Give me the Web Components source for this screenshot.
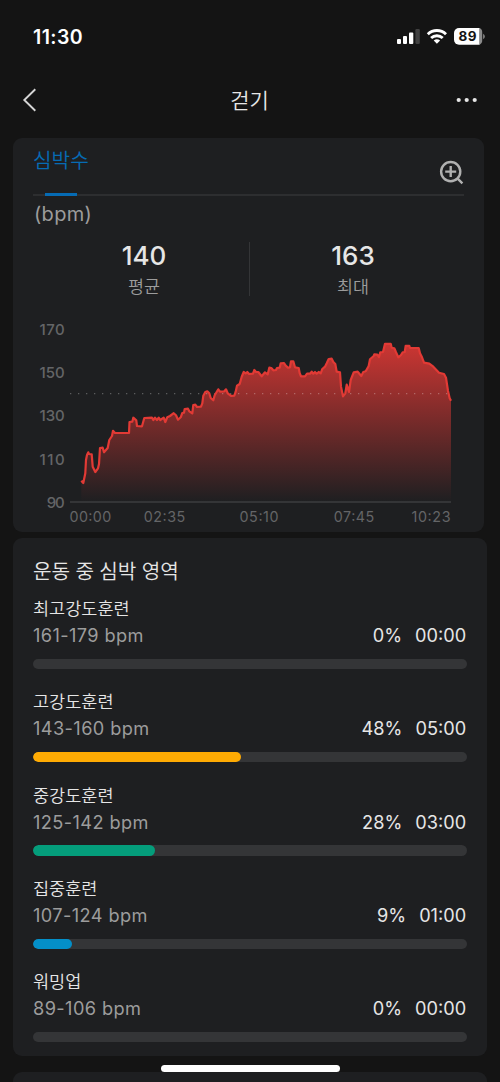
<!DOCTYPE html>
<html lang="ko">
<head>
<meta charset="utf-8">
<meta name="viewport" content="width=device-width, initial-scale=1">
<title>걷기</title>
<style>
    body {
        margin: 0;
        background: #141414;
        color: #e6e6e6;
        font-family: Inter, "Noto Sans CJK KR", sans-serif;
        overflow: hidden;
    }
</style>
</head>
<body>

<workout-screen>
    <status-bar slot="top" time="11:30" battery="89"></status-bar>
    <nav-bar slot="top">걷기</nav-bar>

    <workout-card class="heart">
        <chart-tabs>심박수</chart-tabs>
        <stat-pair unit="(bpm)">
            <stat-value value="140">평균</stat-value>
            <stat-value value="163">최대</stat-value>
        </stat-pair>
        <heart-chart></heart-chart>
    </workout-card>

    <workout-card class="zones">
        <zone-list>
            <span slot="title">운동 중 심박 영역</span>
            <zone-row range="161-179 bpm" percent="0" time="00:00">최고강도훈련</zone-row>
            <zone-row range="143-160 bpm" percent="48" time="05:00" color="#ffab03">고강도훈련</zone-row>
            <zone-row range="125-142 bpm" percent="28" time="03:00" color="#049d7b">중강도훈련</zone-row>
            <zone-row range="107-124 bpm" percent="9" time="01:00" color="#048fc8">집중훈련</zone-row>
            <zone-row range="89-106 bpm" percent="0" time="00:00">워밍업</zone-row>
        </zone-list>
    </workout-card>

    <workout-card class="next"></workout-card>
</workout-screen>

<script>
function define(name, html, setup) {
    var template = document.createElement("template");
    template.innerHTML = html;

    window.customElements.define(name, class extends HTMLElement {
        constructor() {
            super();
            this.shadow = this.attachShadow({ mode: "open" });
            this.shadow.appendChild(template.content.cloneNode(true));
        }

        connectedCallback() {
            if (setup) setup(this, this.shadow);
        }
    });
}

define("workout-screen", `
<style>
    :host {
        display: block;
        position: relative;
        height: 1082px;
        overflow: hidden;
    }

    main {
        display: flex;
        flex-direction: column;
        padding-left: 13px;
    }

    ::slotted(.heart) { width: 471px; height: 393.5px; margin-bottom: 6.5px; }
    ::slotted(.zones) { width: 474px; height: 517.5px; margin-bottom: 16.5px; }
    ::slotted(.next) { width: 474px; height: 40px; }

    /* Home indicator floats over the scrolling cards */
    #home {
        position: absolute;
        left: 161px;
        bottom: 10px;
        width: 179px;
        height: 7px;
        border-radius: 4px;
        background: #fff;
    }
</style>
<slot name="top"></slot>
<main><slot></slot></main>
<div id="home"></div>
`);

define("status-bar", `
<style>
    :host {
        display: flex;
        justify-content: space-between;
        align-items: center;
        height: 73px;
        padding: 0 14px 0 33px;
        color: #fff;
    }

    #time {
        font-size: 19.5px;
        font-weight: 600;
        line-height: 24px;
        letter-spacing: 0.4px;
    }

    svg { display: block; }
    text { font-weight: 700; font-size: 13.5px; letter-spacing: 0.3px; }
</style>
<span id="time"></span>
<svg width="90" height="20" viewBox="396 27 90 20">
    <rect x="397" y="39" width="4" height="5" rx="1" fill="#fff"/>
    <rect x="403" y="36" width="4" height="8" rx="1" fill="#fff"/>
    <rect x="409" y="32.6" width="4.3" height="11.4" rx="1" fill="#fff"/>
    <rect x="415.4" y="29" width="4.4" height="15" rx="1.2" fill="#414141"/>
    <g fill="none" stroke="#fff" stroke-width="2.9">
        <path d="M427.8 34.2a13.2 13.2 0 0 1 18.2 0"/>
        <path d="M431.1 38a8.4 8.4 0 0 1 11.6 0"/>
    </g>
    <path d="M433.7 40.6a4.8 4.8 0 0 1 6.4 0L436.9 43.7z" fill="#fff"/>
    <path d="M459 28h20.6v16.8H459a5 5 0 0 1-5-5V33a5 5 0 0 1 5-5z" fill="#fff"/>
    <path d="M479.6 28.1a4.6 4.6 0 0 1 2.6 4.4v7.6a4.6 4.6 0 0 1-2.6 4.6z" fill="#8b8b8b"/>
    <path d="M483 33.8q2 .9 2 2.7t-2 2.7z" fill="#777"/>
    <text x="467.7" y="41.4" text-anchor="middle" fill="#141414"></text>
</svg>
`, (host, root) => {
    root.querySelector("#time").textContent = host.getAttribute("time");
    root.querySelector("text").textContent = host.getAttribute("battery");
});

define("nav-bar", `
<style>
    :host {
        display: grid;
        grid-template-columns: 40px 1fr 40px;
        align-items: center;
        height: 54px;
        padding: 0 13px 11px 12px;
    }

    span {
        padding-top: 2px;
        text-align: center;
        font-size: 21px;
        font-weight: 350;
        line-height: 30px;
    }

    svg { display: block; }
</style>
<svg width="40" height="30" viewBox="12 85 40 30">
    <path d="M35.3 89.3 24.3 100l11 10.7" fill="none" stroke="#d6d6d6" stroke-width="1.9"/>
</svg>
<span><slot></slot></span>
<svg width="40" height="30" viewBox="447 85 40 30" fill="#e6e6e6">
    <circle cx="458.7" cy="100" r="2.1"/>
    <circle cx="466.7" cy="100" r="2.1"/>
    <circle cx="474.7" cy="100" r="2.1"/>
</svg>
`);

define("workout-card", `
<style>
    :host {
        display: block;
        box-sizing: border-box;
        flex: none;
        border-radius: 9px;
        background: #1e1f21;
        overflow: hidden;
    }
</style>
<slot></slot>
`);

define("chart-tabs", `
<style>
    :host {
        display: flex;
        justify-content: space-between;
        height: 56px;
        margin: 0 20px;
        border-bottom: 2px solid #2d2e30;
    }

    #tab {
        display: flex;
        flex-direction: column;
        justify-content: space-between;
        align-items: center;
        box-sizing: border-box;
        height: 58px;
        padding-top: 8px;
        color: #066bb4;
        font-size: 20.2px;
        font-weight: 350;
        line-height: 30px;
    }

    #tab::after {
        content: "";
        width: 32px;
        height: 3px;
        background: #066bb4;
    }

    svg { display: block; margin-top: 20px; }
</style>
<div id="tab"><slot></slot></div>
<svg width="26" height="28" viewBox="438 158 26 28" fill="none" stroke="#b0b0b0" stroke-width="2.4">
    <circle cx="450.7" cy="171.6" r="9.6"/>
    <path d="M445.2 171.6h11M450.7 166.1v11M457.4 178.4l5 4.9"/>
</svg>
`);

define("stat-pair", `
<style>
    :host { display: block; }

    #unit {
        margin-left: 21px;
        height: 46px;
        font-size: 20px;
        line-height: 36px;
        letter-spacing: 0.3px;
        color: #9c9c9c;
    }

    #pair {
        display: grid;
        grid-template-columns: 1fr 1fr;
        height: 54px;
        margin: 0 26px 14px 27px;
        background: linear-gradient(#343537, #343537) center / 1px 100% no-repeat;
    }
</style>
<div id="unit"></div>
<div id="pair"><slot></slot></div>
`, (host, root) => {
    root.querySelector("#unit").textContent = host.getAttribute("unit");
});

define("stat-value", `
<style>
    :host { display: block; padding-right: 1px; text-align: center; }

    b {
        display: block;
        font-size: 26px;
        font-weight: 500;
        line-height: 28px;
    }

    span {
        display: block;
        margin-top: 4px;
        font-size: 17.4px;
        font-weight: 350;
        line-height: 26px;
        color: #9c9c9c;
    }
</style>
<b></b>
<span><slot></slot></span>
`, (host, root) => {
    root.querySelector("b").textContent = host.getAttribute("value");
});

// Heart rate trace, x/y in chart units
const TRACE = `81.3,480.7 83.3,483 85.3,473.3 86,460 87,455 88.3,452.3 89,454 91.7,454.3 92.7,466.7
95.3,472 98,468.3 99,464 100,448 102.7,447.7 104,452.3 107.7,448 109.3,440 112,436 113,430.8
115,433 129,433 129.5,422 132.3,421.7 133.3,417.7 136.3,420.3 137,426 142,426.3 144.3,418
152,417.7 153.3,420 155,417.7 157,420 158.7,417.7 160.3,420 163.7,417.7 165.3,422 167.3,417.3
170,416 173.7,413.2 176,415.3 178,419.7 180.7,417.3 182.3,413 184,412.7 184.7,409 188,408.7
189.3,411.3 192.3,413.3 193.3,405 195.3,404.7 197,407 201,406.7 202.3,403.3 203.3,395.7
205.3,392 207.3,391.3 209.3,393.3 210.7,398 213.3,400.3 214.7,395.3 218.3,389.3 220,391.7
224.3,391.3 226,389.3 227.7,393.3 231.3,396 234.3,395.7 235.7,391.7 237,385.7 239.7,384
241.7,376.7 243.7,372 245.7,373.3 247.3,372 249,374 253,373.7 254.3,370 256,372 258.3,372
261.7,376.3 265,372.3 267.7,374.3 269.3,367.7 271.3,368 273.3,370.3 276,370 277,368
279.7,367.7 280.7,363.3 284,363 285.7,365.7 288,367.7 290,367.3 291,361.3 293.3,361.3
295,367.3 298.7,368 299.7,373.3 301,376.3 305,376.3 307,373.7 310,373.7 311.7,371.7
313.3,373.7 315,372 316.7,373.7 318.7,372 320.7,373.3 322.3,369 325,366.7 326.7,363.3
328.7,359 331.7,358.7 333.3,362 335.3,364 336.7,371.7 340,372.3 341,386.7 343,396.3
345.3,393.3 346.7,384.7 349,392 350.7,380 353.7,372.3 357.7,371.7 361.3,376 363.3,372
365.7,371.3 368.7,366 370,359.3 373.7,356 374.3,354.3 377.3,354.7 379,357 380.3,352.3
383,352 385,343.8 390.7,343.8 391.7,347.7 394.3,348.3 396,352.3 398.3,357.3 401,355
402.7,352.3 404.7,352 405.7,345.8 409.3,345.8 410,348 418.7,348 420,353.3 422,357.3
424,362.7 429.3,363.7 433.3,366.7 439,372.7 444,374 446,377.7 448,391 449.7,398.3 451,400.7`;

define("heart-chart", `
<style>
    :host { display: block; }
    svg { display: block; }

    text { fill: #646567; }
    .y { font-size: 15px; font-weight: 500; }
    .x { font-size: 14.3px; }
</style>
<svg width="471" height="222" viewBox="13 310 471 222">
    <defs>
        <linearGradient id="fade" gradientUnits="userSpaceOnUse" x1="0" y1="343" x2="0" y2="502">
            <stop offset="0" stop-color="#e53935" stop-opacity="0.88"/>
            <stop offset="1" stop-color="#e53935" stop-opacity="0"/>
        </linearGradient>
    </defs>
    <g id="labels"></g>
    <path d="M70 502H451" stroke="#343537" stroke-width="2"/>
    <polygon points="81.3,501 ${TRACE} 451,501" fill="url(#fade)"/>
    <path d="M70 393.7H451" stroke="#fff" stroke-opacity="0.28" stroke-width="1.3" stroke-dasharray="1.3 6.7"/>
    <polyline points="${TRACE}" fill="none" stroke="#e23a35" stroke-width="2.2" stroke-linejoin="round"/>
</svg>
`, (host, root) => {
    const labels = root.querySelector("#labels");
    const add = (cls, x, y, text, length) => {
        const el = document.createElementNS("http://www.w3.org/2000/svg", "text");
        el.setAttribute("class", cls);
        el.setAttribute("x", x);
        el.setAttribute("y", y);
        if (length) el.setAttribute("textLength", length);
        el.textContent = text;
        labels.appendChild(el);
    };

    [170, 150, 130, 110].forEach((bpm, i) => add("y", 39.4, 335 + i * 43.2, bpm, 25.4));
    add("y", 46.8, 507.8, 90, 18);

    add("x", 69.6, 522, "00:00", 41.6);
    add("x", 143.8, 522, "02:35", 41.4);
    add("x", 239.4, 522, "05:10", 39.2);
    add("x", 333.8, 522, "07:45", 40.4);
    add("x", 411.4, 522, "10:23", 39.2);
});

define("zone-list", `
<style>
    :host { display: block; padding: 21px 20px 0; }

    h2 {
        margin: 0 0 13px;
        font-size: 20.2px;
        font-weight: 350;
        line-height: 26px;
        word-spacing: -0.4px;
    }
</style>
<h2><slot name="title"></slot></h2>
<slot></slot>
`);

define("zone-row", `
<style>
    :host { display: block; height: 93.35px; }

    #name {
        font-size: 17.5px;
        font-weight: 350;
        line-height: 22px;
    }

    #info {
        display: flex;
        gap: 13px;
        margin-top: -1px;
        padding-right: 0.8px;
        font-size: 18.2px;
        line-height: 32px;
    }

    #range {
        margin-right: auto;
        letter-spacing: 0.4px;
        color: #9c9c9c;
    }

    #bar {
        height: 10.5px;
        margin-top: 7.5px;
        border-radius: 6px;
        background: #343537;
        overflow: hidden;
    }

    #fill {
        height: 100%;
        border-radius: 6px;
    }
</style>
<div id="name"><slot></slot></div>
<div id="info">
    <span id="range"></span>
    <span id="percent"></span>
    <span id="time"></span>
</div>
<div id="bar"><div id="fill"></div></div>
`, (host, root) => {
    const percent = host.getAttribute("percent");
    const fill = root.querySelector("#fill");

    root.querySelector("#range").textContent = host.getAttribute("range");
    root.querySelector("#percent").textContent = percent + "%";
    root.querySelector("#time").textContent = host.getAttribute("time");
    fill.style.width = percent + "%";
    fill.style.background = host.getAttribute("color") || "transparent";
});
</script>
</body>
</html>
